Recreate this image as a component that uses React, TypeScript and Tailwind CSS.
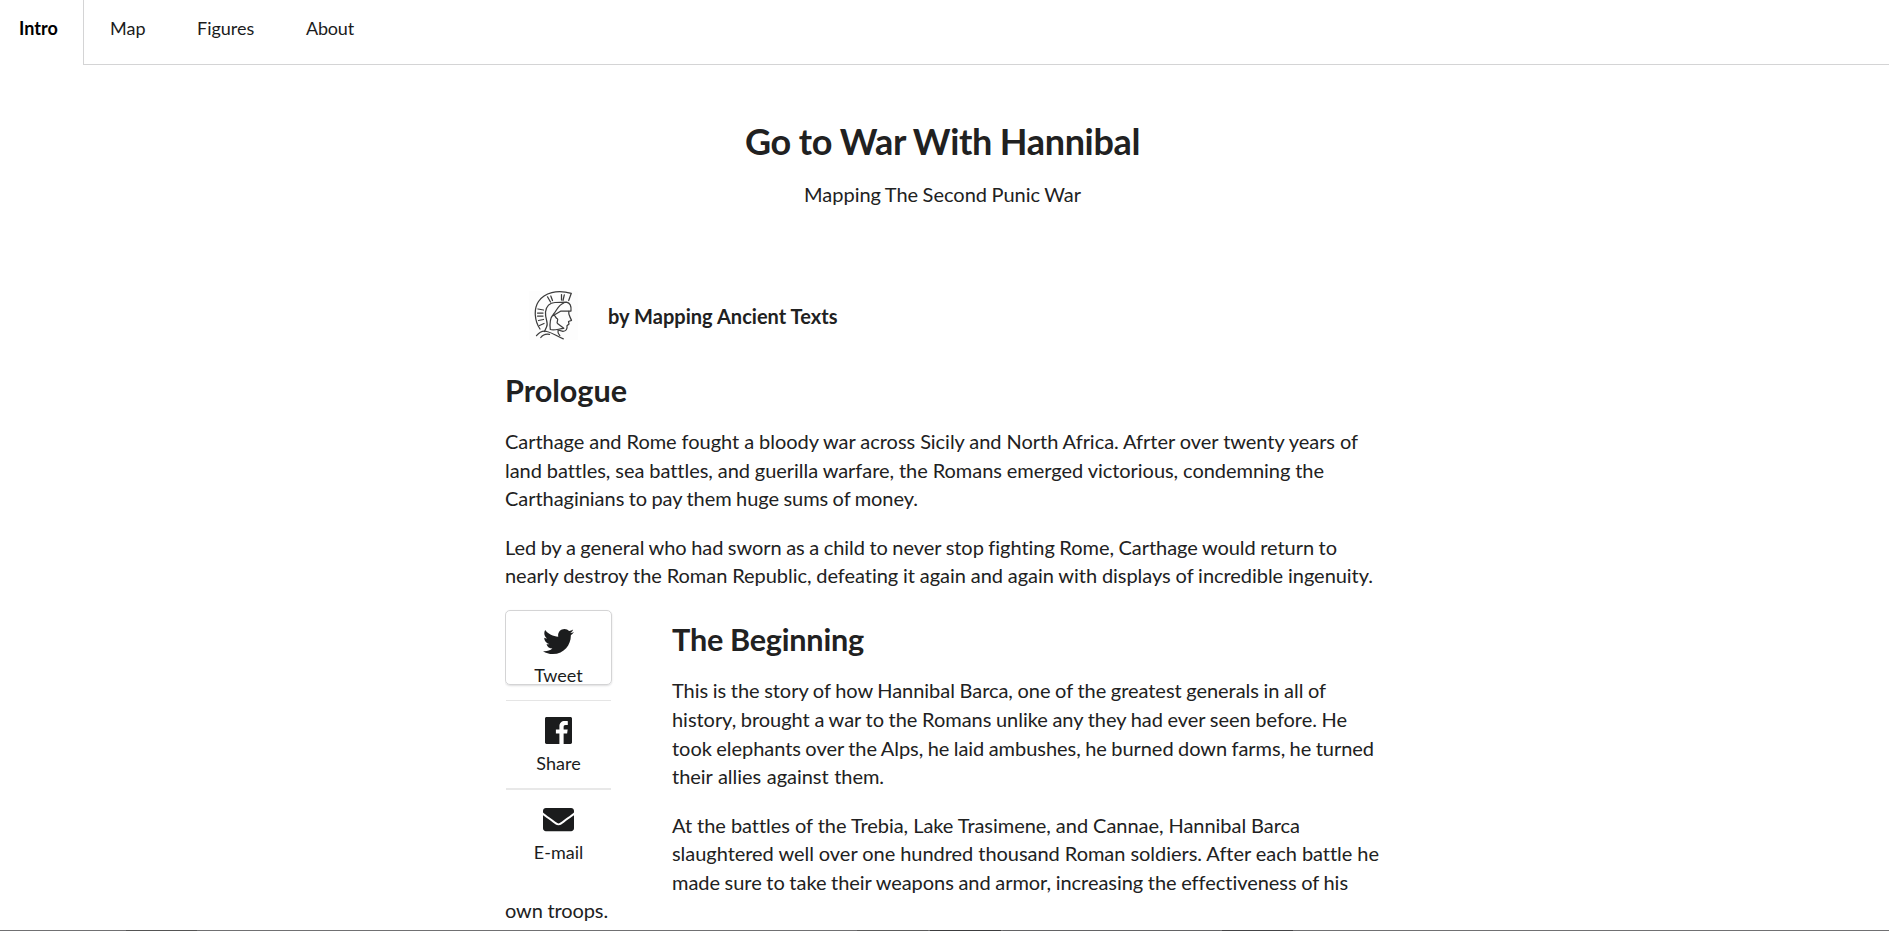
import React from "react";
import { FaTwitter, FaEnvelope } from "react-icons/fa";

type Line = [text: string, width: string];

const justified = "block whitespace-nowrap tracking-[-0.04px] [text-align-last:justify] [word-spacing:-2px]";

const Lines = ({ lines }: { lines: Line[] }) => (
  <p className="mb-5 text-[20px] leading-[28.57px]">
    {lines.map(([text, width]) => (
      <span key={text} className={`${justified} ${width}`}>{text}</span>
    ))}
  </p>
);

const Helmet = () => (
  <svg viewBox="0 0 49 49" className="h-[49px] w-[49px] bg-[#fdfdfd]" fill="none" stroke="#3c3c3c" strokeWidth="1.25" strokeLinecap="round" strokeLinejoin="round">
    <path d="M11 38C5.500 30 4.500 18 9.500 10.500C15.500 1.500 28 -1.500 42.300 2.300L39.700 9.500" />
    <path d="M15.500 40.500L17.500 36C20 32 16 29 16.500 21C17.500 14 21 11.700 26 11.500L37.500 11.200C41 12 42.500 15 42 20H32L24.300 24.500" />
    <path d="M34.800 12C29 14 28.500 18.500 24.300 23.500C21 27 20.500 32 21.300 38.500C25 40 29 38 34.800 37.300L28.500 32.500C27 31 30 28.500 28.200 27.500C26.500 27.500 27 25 24.500 23.800" />
    <path d="M39.800 20.300C39 23.500 41 25.500 42.500 29.300L39.500 30.500L40 33L38 34.800C38.500 38 37 40.300 34 40.300L29 39C28.500 41 29.500 43 30.800 44.700" />
    <path d="M18.500 5.800L21.500 11M21.800 5L23.500 9.500M32.500 3.500V9M35.300 3.800L34 9.500M9 18L14.500 19M8.500 22H14M8.500 25H14M9.500 29.500L14.500 28.500M10.500 34.500L15 32.500" />
    <path d="M7.500 44.700C10.500 41 14 39.300 18 40.500C24 42 28 45.500 34.300 47.800M11.800 46.500C14 43.500 17 42.800 20.500 43.300" />
  </svg>
);

const Facebook = () => (
  <svg viewBox="0 0 448 512" className="h-[31px] w-[27px] shrink-0" fill="currentColor">
    <path d="M448 56.7v398.5c0 13.700-11.100 24.700-24.700 24.700H309.100V306.500h58.200l8.700-67.600h-67v-43.200c0-19.600 5.400-32.900 33.500-32.900h35.800v-60.500c-6.200-.8-27.400-2.700-52.200-2.700-51.600 0-87 31.500-87 89.400v49.900h-58.400v67.600h58.400V480H24.700C11.100 480 0 468.900 0 455.300V56.700C0 43.100 11.100 32 24.700 32h398.500c13.700 0 24.800 11.100 24.800 24.700z" />
  </svg>
);

export default function App() {
  return (
    <div className="flex h-[931px] w-full flex-col overflow-hidden bg-white font-['Lato',sans-serif] text-[#212121] [font-variant-ligatures:none]">
      <nav className="flex h-[65px] shrink-0 text-[18px] leading-[18px] text-[#1b1c1d]">
        <div className="w-[83px] pl-[19px] pt-[19px] font-bold text-black">Intro</div>
        <div className="flex flex-1 border-b border-l border-[#d4d4d5] pt-[19px]">
          <span className="w-[87px] pl-[26px]">Map</span>
          <span className="w-[109px] pl-[26px]">Figures</span>
          <span className="pl-[26px] tracking-[-0.2px]">About</span>
        </div>
      </nav>
      <main className="ml-[505px] h-[865px] w-[875px] shrink-0 overflow-hidden">
        <h1 className="mx-auto w-[395px] whitespace-nowrap pt-[53px] text-[36px] leading-[46px] font-bold tracking-[-0.35px] [text-align-last:justify] [word-spacing:-5px]">Go to War With Hannibal</h1>
        <p className="mx-auto w-[277px] whitespace-nowrap pt-[16px] text-[20px] leading-[29px] [text-align-last:justify] [word-spacing:-2px]">Mapping The Second Punic War</p>
        <div className="mt-[82px] flex h-[49px] items-center pl-[24px]">
          <Helmet />
          <span className="pl-[30px] text-[20px] font-bold tracking-[0.03px]">by Mapping Ancient Texts</span>
        </div>
        <h2 className="mt-[31px] mb-[17px] text-[30.6px] leading-[39px] font-bold">Prologue</h2>
        <Lines
          lines={[
            ["Carthage and Rome fought a bloody war across Sicily and North Africa. Afrter over twenty years of", "w-[853px]"],
            ["land battles, sea battles, and guerilla warfare, the Romans emerged victorious, condemning the", "w-[819px]"],
            ["Carthaginians to pay them huge sums of money.", "w-[413px]"],
          ]}
        />
        <Lines
          lines={[
            ["Led by a general who had sworn as a child to never stop fighting Rome, Carthage would return to", "w-[832px]"],
            ["nearly destroy the Roman Republic, defeating it again and again with displays of incredible ingenuity.", "w-[868px]"],
          ]}
        />
        <div className="flex h-[286px]">
          <aside className="w-[167px] shrink-0 text-[18px] leading-[22px] text-[#1b1c1d]">
            <div className="flex h-[75px] w-[107px] flex-col items-center rounded-[5px] border border-[#d4d4d5] pt-[15px] shadow-[0_1px_2px_0_rgba(34,36,38,0.15)]">
              <FaTwitter className="h-[31px] w-[31px] shrink-0" />
              <span className="mt-[7px]">Tweet</span>
            </div>
            <div className="mt-[15px] ml-px flex h-[88px] w-[105px] flex-col items-center border-t border-[#e5e5e5] pt-[14px]">
              <Facebook />
              <span className="mt-[6px]">Share</span>
            </div>
            <div className="ml-px flex h-[90px] w-[105px] flex-col items-center border-t-2 border-[#e8e8e8] pt-[14px]">
              <FaEnvelope className="h-[31px] w-[31px] shrink-0" />
              <span className="mt-[6px]">E-mail</span>
            </div>
          </aside>
          <section>
            <h2 className="mt-[10px] mb-[17.6px] w-[192px] whitespace-nowrap text-[30.6px] leading-[39px] font-bold tracking-[-0.2px] [text-align-last:justify] [word-spacing:-5px]">The Beginning</h2>
            <Lines
              lines={[
                ["This is the story of how Hannibal Barca, one of the greatest generals in all of", "w-[654px]"],
                ["history, brought a war to the Romans unlike any they had ever seen before. He", "w-[675px]"],
                ["took elephants over the Alps, he laid ambushes, he burned down farms, he turned", "w-[702px]"],
                ["their allies against them.", "w-[212px]"],
              ]}
            />
            <Lines
              lines={[
                ["At the battles of the Trebia, Lake Trasimene, and Cannae, Hannibal Barca", "w-[628px]"],
                ["slaughtered well over one hundred thousand Roman soldiers. After each battle he", "w-[707px]"],
                ["made sure to take their weapons and armor, increasing the effectiveness of his", "w-[676px]"],
              ]}
            />
          </section>
        </div>
        <p className="w-[103px] whitespace-nowrap text-[20px] leading-[28.57px] tracking-[-0.1px] [text-align-last:justify] [word-spacing:-2px]">own troops.</p>
      </main>
      <div className="flex h-px w-full shrink-0 bg-[#707072]">
        <span className="ml-[126px] w-[71px] bg-[#545454]" />
        <span className="ml-[660px] w-[71px] bg-[#5c5c5c]" />
        <span className="ml-[2px] w-[71px] bg-[#3c3c3e]" />
        <span className="ml-[2px] w-[217px] bg-[#636365]" />
        <span className="ml-[2px] w-[71px] bg-[#444446]" />
      </div>
    </div>
  );
}
